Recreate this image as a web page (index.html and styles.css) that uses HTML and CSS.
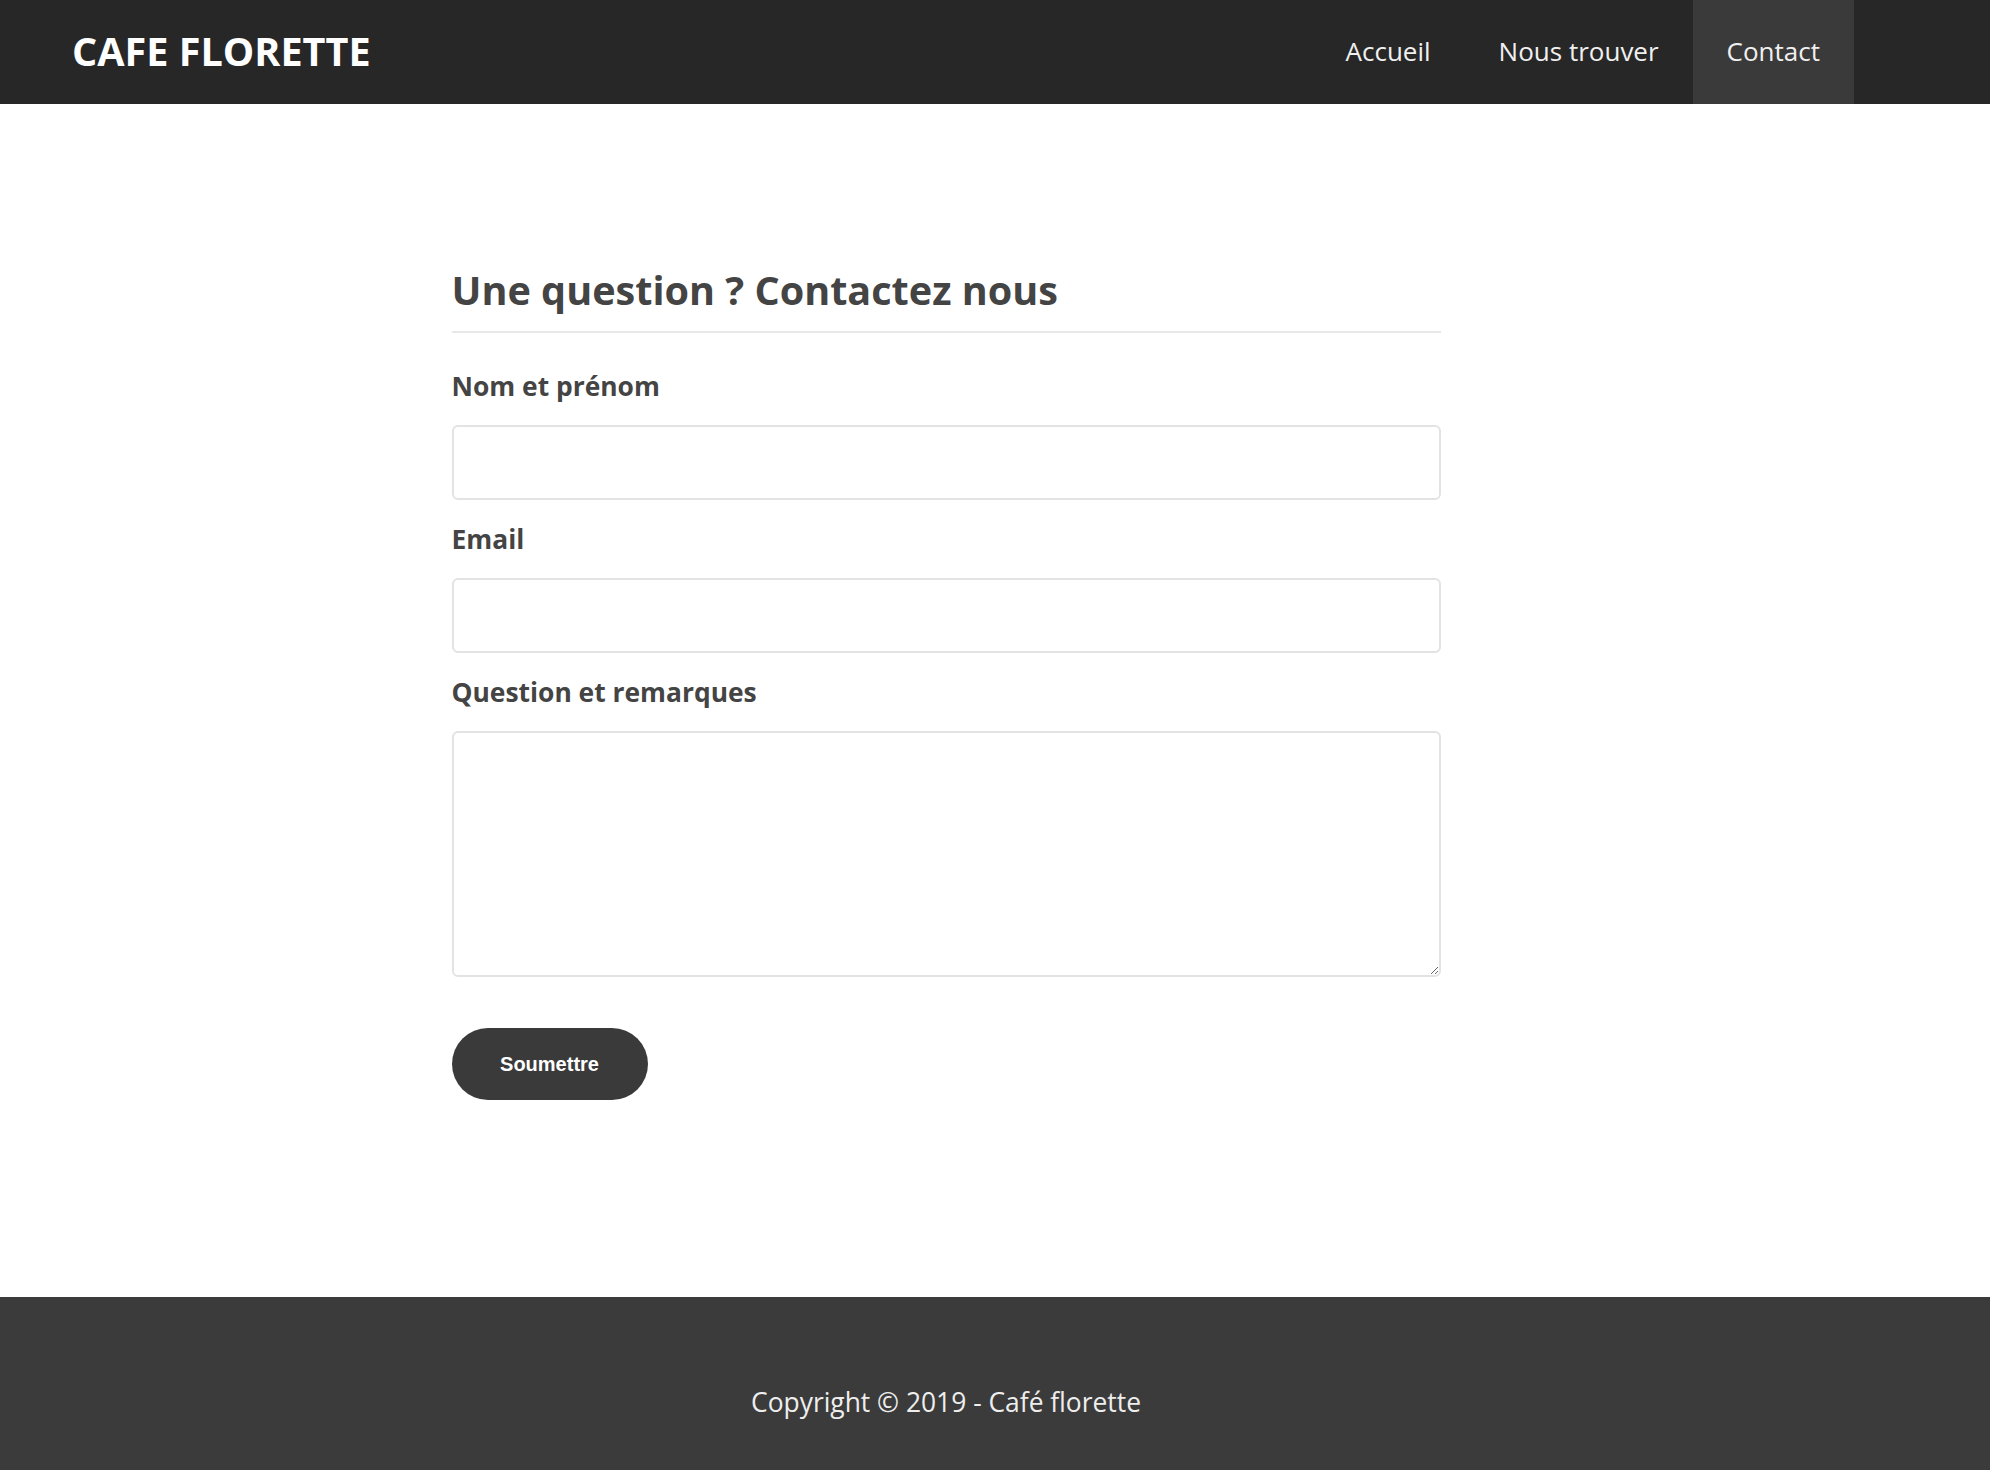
FILE: index.html
```html
<!DOCTYPE html>
<html lang="fr">
<head>
<meta charset="utf-8">
<title>Café Florette - Contact</title>
<link rel="stylesheet" href="styles.css">
</head>
<body>
<header class="site-header">
  <div class="logo">CAFE FLORETTE</div>
  <nav class="nav">
    <a class="nav-link" href="#">Accueil</a>
    <a class="nav-link" href="#">Nous trouver</a>
    <a class="nav-link active" href="#">Contact</a>
  </nav>
</header>
<main class="main">
  <div class="page">
    <form class="contact">
      <h2 class="title">Une question ? Contactez nous</h2>
      <label class="label" for="nom">Nom et prénom</label>
      <input class="field" id="nom" type="text">
      <label class="label" for="email">Email</label>
      <input class="field" id="email" type="email">
      <label class="label" for="msg">Question et remarques</label>
      <textarea class="area" id="msg"></textarea>
      <button class="submit" type="button">Soumettre</button>
    </form>
  </div>
</main>
<footer class="footer">
  <div class="page">
    <p class="copy">Copyright © 2019 - Café florette</p>
  </div>
</footer>
</body>
</html>
```
FILE: styles.css
```css
* { box-sizing: border-box; }
html, body { margin: 0; padding: 0; }
body {
  font-family: "Open Sans", "DejaVu Sans", sans-serif;
  background: #ffffff;
  color: #444444;
}
.site-header {
  height: 104px;
  background: #272727;
  display: flex;
  align-items: stretch;
  justify-content: space-between;
  padding: 0 136px 0 72px;
}
.logo {
  display: flex;
  align-items: center;
  color: #ffffff;
  font-weight: 700;
  font-size: 39.6px;
  padding-bottom: 2px;
}
.nav { display: flex; align-items: stretch; }
.nav-link {
  display: flex;
  align-items: center;
  padding: 0 34px 3px;
  color: #f0f0f0;
  text-decoration: none;
  font-size: 26px;
}
.nav-link.active { background: #3a3a3a; }
.page {
  width: 1892px;
}
.main {
  padding: 163px 0 197px;
}
.contact {
  width: 989px;
  margin: 0 auto;
  display: flex;
  flex-direction: column;
  align-items: flex-start;
}
.title {
  margin: 0;
  width: 100%;
  font-size: 39.6px;
  line-height: 47px;
  font-weight: 700;
  color: #444444;
  padding-bottom: 17px;
  border-bottom: 2px solid #e8e8e8;
  margin-bottom: 33px;
}
.label {
  font-size: 26.4px;
  line-height: 40px;
  font-weight: 700;
  color: #444444;
  margin-bottom: 19px;
}
.field {
  width: 100%;
  height: 75px;
  border: 2px solid #e3e3e3;
  border-radius: 6px;
  margin: 0 0 19px;
  font: inherit;
  font-size: 24px;
  padding: 0 16px;
  background: #ffffff;
}
.area {
  width: 100%;
  height: 246px;
  border: 2px solid #e3e3e3;
  border-radius: 6px;
  margin: 0;
  font: inherit;
  font-size: 24px;
  padding: 12px 16px;
  background: #ffffff;
}
.submit {
  margin-top: 51px;
  width: 196px;
  height: 72px;
  border: none;
  border-radius: 36px;
  background: #3a3a3a;
  color: #ffffff;
  font-family: "Liberation Sans", Arial, sans-serif;
  font-weight: 700;
  font-size: 20px;
  cursor: pointer;
}
.footer {
  background: #3b3b3b;
  padding: 86px 0 50px;
}
.copy {
  margin: 0;
  text-align: center;
  color: #eeeeee;
  font-size: 26.4px;
  line-height: 39px;
}
```
